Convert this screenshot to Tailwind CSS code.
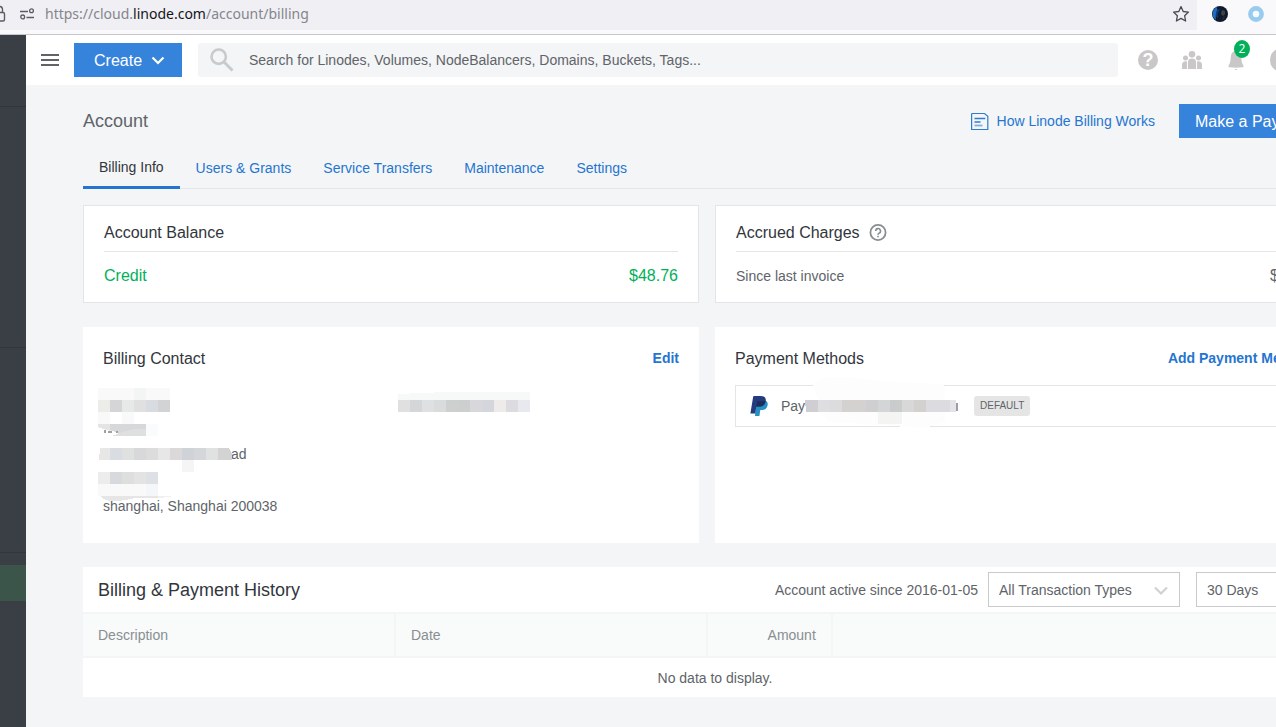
<!DOCTYPE html>
<html lang="en">
<head>
<meta charset="utf-8">
<meta name="viewport" content="width=device-width, initial-scale=1">
<title>Account | Billing</title>
<script src="https://cdn.jsdelivr.net/npm/@tailwindcss/browser@4"></script>
</head>
<body class="min-h-screen flex flex-col overflow-x-hidden bg-[#f4f5f6] font-['Liberation_Sans',Arial,sans-serif] text-sm leading-5 text-[#606469]">

<!-- Browser address bar -->
<div class="flex h-[35px] shrink-0 border-b border-[#c8c8cb] bg-[#f9f9fb]">
  <div class="flex h-[30px] flex-1 items-center bg-[#f0f0f4] pr-[7px] pb-[2px]">
    <svg class="h-[18px] w-[20px] shrink-0" viewBox="0 0 20 18" fill="none" stroke="#5b5b66" stroke-width="1.4"><rect x="-6" y="7.5" width="10.5" height="8.5" rx="1.5"/><path d="M-3.500 7.500V4.500a3 3 0 0 1 6 0v3"/></svg>
    <svg class="h-3 w-[15px] shrink-0" viewBox="0 0 15 12" fill="none" stroke="#5b5b66" stroke-width="1.3"><path d="M0 3.500h8M6.500 9.500H14"/><circle cx="11.500" cy="2.800" r="1.900"/><circle cx="2.700" cy="8.900" r="1.900"/></svg>
    <p class="ml-[10px] flex-1 font-['Noto_Sans','Open_Sans',sans-serif] text-sm leading-5 text-[#85858c]">https://cloud.<span class="text-[#15141a]">linode.com</span>/account/billing</p>
    <button type="button" aria-label="Bookmark this page"><svg class="block size-[18px]" viewBox="0 0 18 18" fill="none" stroke="#4a4a55" stroke-width="1.300" stroke-linejoin="round"><path d="M9 1.600l2.200 4.900 5.300.6-3.900 3.600 1 5.300L9 13.400 4.400 16l1-5.300L1.500 7.100l5.300-.6z"/></svg></button>
  </div>
  <div class="flex w-[79px] items-center gap-5 pb-[6px] pl-[15px]">
    <svg class="size-4" viewBox="0 0 16 16"><circle cx="8" cy="8" r="8" fill="#101a2c"/><path d="M5 1C1 3 0 7 1 11l3 3c0-3-1-5 1-7z" fill="#1d6ec4"/><path d="M6 3c-2 2-3 5-1 9l1-1c-1-3 0-5 2-7z" fill="#0b3d82"/><path d="M10 4l3 1v3l-2 2-2-2z" fill="#3d424b"/><path d="M11 11l2-1-1 3-2 1z" fill="#252b36"/></svg>
    <svg class="size-4" viewBox="0 0 16 16" fill="none"><circle cx="8" cy="8" r="5.600" fill="#f4faff" stroke="#99cbef" stroke-width="4.600"/></svg>
  </div>
</div>

<div class="flex flex-1">
  <!-- Collapsed navigation -->
  <nav class="flex w-[26px] shrink-0 flex-col bg-[#3a3f46]" aria-label="Main">
    <div class="h-[72px] border-b border-[#32363c]"></div>
    <div class="h-[241px] border-b border-[#32363c]"></div>
    <div class="h-[205px] border-b border-[#32363c]"></div>
    <a href="#" aria-label="Account" class="mt-3 h-9 bg-[#3b554b]"></a>
  </nav>

  <div class="-mr-[55px] min-w-0 flex-1">
    <header class="flex h-[50px] items-center bg-white pl-[15px]">
      <button type="button" aria-label="Open menu" class="flex w-[18px] flex-col gap-[3px]"><span class="h-[2px] w-full bg-[#606469]"></span><span class="h-[2px] w-full bg-[#606469]"></span><span class="h-[2px] w-full bg-[#606469]"></span></button>
      <button type="button" class="ml-[15px] flex h-[34px] w-[108px] items-center bg-[#3683dc] pt-[2px] pl-5 text-base text-white">Create
        <svg class="ml-[9px] h-3 w-[14px]" viewBox="0 0 14 12" fill="none" stroke="#fff" stroke-width="2.200"><path d="M1.500 2.500 7 8l5.500-5.500"/></svg>
      </button>
      <label class="ml-4 flex h-[34px] flex-1 items-center rounded-[3px] bg-[#f4f5f6] pl-3">
        <svg class="size-[24px] shrink-0" viewBox="0 0 24 24" fill="none" stroke="#c9cacb" stroke-width="2.600"><circle cx="8.700" cy="8.700" r="7.200"/><path d="M13.800 13.800 22.500 22.500" stroke-width="3"/></svg>
        <input type="text" aria-label="Search" placeholder="Search for Linodes, Volumes, NodeBalancers, Domains, Buckets, Tags..." class="ml-[15px] flex-1 bg-transparent text-sm outline-none placeholder:text-[#606469]">
      </label>
      <div class="flex w-[213px] items-center pl-5">
        <button type="button" aria-label="Help" class="size-5 rounded-full bg-[#c9c7c7] text-lg leading-5 font-bold text-white">?</button>
        <button type="button" aria-label="Community" class="ml-6"><svg class="block size-5" viewBox="0 0 20 20" fill="#c9c7c7"><circle cx="10" cy="4.300" r="3.300"/><circle cx="3.500" cy="8" r="2.500"/><circle cx="16.500" cy="8" r="2.500"/><path d="M5.900 19v-6.500a4.100 4.100 0 0 1 8.200 0V19zM0 19v-4.200a3.600 3.600 0 0 1 4.900-3.300V19zM20 19v-4.200a3.600 3.600 0 0 0-4.900-3.300V19z"/></svg></button>
        <button type="button" aria-label="Notifications, 2 new" class="relative ml-[26px]">
          <svg class="block h-[22px] w-4" viewBox="0 0 16 22" fill="#c9c7c7"><path d="M8 1.500c3.500.8 5 3.200 5.200 6.300.2 4.200.8 6.800 2.300 8.900.3.900-.200 1.500-1 1.600-4.300.6-8.700.6-13 0-.8-.1-1.300-.7-1-1.600C2 14.600 2.600 12 2.800 7.800 3 4.700 4.500 2.300 8 1.500zM6.500 20h3c-.5 1.300-2.500 1.300-3 0z"/></svg>
          <span class="absolute -top-[9px] left-[6px] h-[18px] w-4 rounded-[50%] bg-[#00b159] font-['Open_Sans','Noto_Sans',sans-serif] text-xs leading-[18px] text-white">2</span>
        </button>
        <button type="button" aria-label="Profile" class="ml-[26px] size-6 rounded-full bg-[#c9c7c7]"></button>
      </div>
    </header>

    <main class="pl-[57px]">
      <div class="flex h-[34px] items-center mt-[19px]">
        <h1 class="flex-1 text-lg leading-6">Account</h1>
        <a href="#" class="flex items-center gap-[7px] text-[#2575d0]">
          <svg class="size-5" viewBox="0 0 20 20" fill="none" stroke="#2f7bd3" stroke-width="1.200"><path d="M2.200 2.500h12.300l3.300 2.800v13.200H1.600V3z"/><path d="M4.500 7.500h10.800M4.500 11h6" stroke-width="1.500"/><path d="M4.500 14.500h8" stroke="#7faee3" stroke-width="1.800"/></svg>
          How Linode Billing Works</a>
        <button type="button" class="ml-6 h-[34px] w-[152px] bg-[#3683dc] pt-[2px] pl-4 text-left text-base text-white">Make a Payment</button>
      </div>

      <nav class="mt-[10px] flex h-[41px] border-b border-[#e3e5e8]" aria-label="Account sections">
        <a href="#" aria-current="page" class="h-[41px] border-b-[3px] border-[#2575d0] px-4 pt-[9px] text-[#32363c]">Billing Info</a>
        <a href="#" class="px-4 pt-[10px] text-[#2575d0]">Users &amp; Grants</a>
        <a href="#" class="px-4 pt-[10px] text-[#2575d0]">Service Transfers</a>
        <a href="#" class="px-4 pt-[10px] text-[#2575d0]">Maintenance</a>
        <a href="#" class="px-4 pt-[10px] text-[#2575d0]">Settings</a>
      </nav>

      <div class="mt-4 grid grid-cols-2 gap-x-4 gap-y-6">
        <section class="border border-[#e3e5e8] bg-white px-5 pt-[17px] pb-4">
          <h2 class="border-b border-[#e3e5e8] pb-2 text-base leading-5 text-[#32363c]">Account Balance</h2>
          <p class="mt-[14px] flex justify-between text-base leading-5 text-[#00b159]"><span>Credit</span><span>$48.76</span></p>
        </section>
        <section class="border border-[#e3e5e8] bg-white px-5 pt-[17px] pb-4">
          <h2 class="flex items-center gap-[9px] border-b border-[#e3e5e8] pb-2 text-base leading-5 text-[#32363c]">Accrued Charges
            <svg class="size-[18px]" viewBox="0 0 18 18" fill="none" stroke="#888f91" stroke-width="1.800"><circle cx="9" cy="8.500" r="7.600"/><path d="M6.700 7a2.400 2.400 0 1 1 3.500 2.100c-.8.500-1.200.8-1.200 1.600M9 11.700v1.600" stroke-width="1.600"/></svg>
          </h2>
          <p class="mt-[14px] flex justify-between leading-5"><span>Since last invoice</span><span class="text-base leading-5">$0.00</span></p>
        </section>

        <section class="h-[216px] bg-white px-5 pt-[22px]">
          <div class="flex justify-between"><h2 class="text-base leading-5 text-[#32363c]">Billing Contact</h2><a href="#" class="leading-[18px] font-bold text-[#2575d0]">Edit</a></div>
          <!-- Contact details, redacted apart from the city -->
          <div class="relative pt-[75px]">
            <svg class="absolute -left-[5px] top-[19px] h-[114px] w-[433px]" viewBox="0 0 433 114" shape-rendering="crispEdges" aria-hidden="true">
              <g fill="#f8f9f8"><path d="M0 0h72v12H0zM0 24h12v12H0zM24 24h12v12H24z"/></g>
              <path d="M36 0h12v12H36z" fill="#f3f5f4"/>
              <path d="M0 12h12v12H0z" fill="#ecece9"/><path d="M12 12h12v12H12z" fill="#d5d5d7"/><path d="M24 12h12v12H24z" fill="#e7e9e8"/><path d="M36 12h12v12H36z" fill="#dfe0df"/><path d="M48 12h12v12H48z" fill="#d8dce0"/><path d="M60 12h12v12H60z" fill="#d2d3d5"/>
              <path d="M0 36h20v8c-8-1-14-2-20-5z" fill="#e4e4e3"/><path d="M12 36h36v12H13l9-3-10-3z" fill="#d6d8d9"/><path d="M36 41h12v7H14l10-4z" fill="#dedfdf"/><path d="M48 36h12v12H48z" fill="#fafbfc"/><path d="M6 42h2v3H6zM10 43h4v2h-4zM18 43h2v2h-2z" fill="#a0a1a5"/>
              <path d="M2 60h10v12H1z" fill="#e7e7e5"/><path d="M12 60h12v12H12z" fill="#d9dde1"/><path d="M24 60h12v12H24z" fill="#dfe1e0"/><path d="M36 60h12v12H36z" fill="#d8d8da"/><path d="M48 60h12v12H48z" fill="#dcdcdd"/><path d="M60 60h12v12H60z" fill="#e7e7e8"/><path d="M72 60h12v12H72z" fill="#dad8d9"/><path d="M84 60h12v12H84z" fill="#cfd2d6"/><path d="M96 60h12v12H96z" fill="#d5d6da"/><path d="M108 60h12v12h-12z" fill="#e0e1e1"/><path d="M120 60h11l3 6v6h-14z" fill="#d3d3d3"/><path d="M84 72h12v12H84z" fill="#f5f5f6"/>
              <path d="M0 84h12v12H0z" fill="#ececeb"/><path d="M12 84h12v12H12z" fill="#d8d9dc"/><path d="M24 84h12v12H24z" fill="#dddfdd"/><path d="M36 84h12v12H36z" fill="#e3e3e4"/><path d="M48 84h12v12H48z" fill="#dde1e6"/><path d="M0 96h48v12H0z" fill="#faf9f9"/><path d="M48 96h12v12H48z" fill="#f4f6f9"/>
              <path d="M2 108h58v2H42c-12 0-16 4-30 3-5-1-8-3-10-5z" fill="#e6e6e6"/><path d="M60 108h15l-4 1-11 1z" fill="#f0f0f0"/>
              <path d="M300 6l48-2h84v8H300z" fill="#f7f8f8"/>
              <path d="M300 12h12v12h-12z" fill="#e0e0e1"/><path d="M312 12h12v12h-12z" fill="#d5d6d8"/><path d="M324 12h12v12h-12z" fill="#dfe0e2"/><path d="M336 12h12v12h-12z" fill="#dadbdd"/><path d="M348 12h12v12h-12z" fill="#cecfcf"/><path d="M360 12h12v12h-12z" fill="#cdcfce"/><path d="M372 12h12v12h-12z" fill="#d8d8dc"/><path d="M384 12h12v12h-12z" fill="#d4d6dc"/><path d="M396 12h12v12h-12z" fill="#eeebea"/><path d="M408 12h12v12h-12z" fill="#dcdce0"/><path d="M420 12h12v12h-12z" fill="#e8e9ee"/>
            </svg>
            <p class="pl-[128px]">ad</p>
            <p class="mt-8">shanghai, Shanghai 200038</p>
          </div>
        </section>
        <section class="bg-white px-5 pt-[22px]">
          <div class="flex justify-between"><h2 class="text-base leading-5 text-[#32363c]">Payment Methods</h2><a href="#" class="leading-[18px] font-bold text-[#2575d0]">Add Payment Method</a></div>
          <div class="relative mt-4 flex h-[42px] items-center border border-[#e3e5e8] pl-[14px]">
            <svg class="h-5 w-[18px]" viewBox="0 0 18 20" aria-label="PayPal"><path d="M6 6 15.500 4.500c2 1.200 2.600 3 2 5.200-.7 3-3 4.300-6 4.300h-1.200l-.9 6H5z" fill="#2790c3"/><path d="M3.200.5C3.300.2 3.600 0 4 0h6.800c3.500 0 5.500 1.800 4.900 5.100-.6 3.700-3 5.400-6.600 5.400H6.300L5.200 17.500H.4z" fill="#253b80"/><path d="M7.300 5.300 15.600 5c-.6 3.800-3 5.500-6.500 5.500H6.300z" fill="#1f2c5c"/></svg>
            <span class="ml-[13px] w-[193px]">Pay</span>
            <svg class="absolute left-[68px] -top-[10px] h-[56px] w-[155px]" viewBox="0 0 155 56" shape-rendering="crispEdges" aria-hidden="true"><path d="M8 8 24 1h22l30 4 62 3 3 2v36l-20 6-50-3-48-4z" fill="#fdfdfd"/><path d="M1 24h13v12H2z" fill="#cfced3"/><path d="M14 24h12v12H14z" fill="#dedee1"/><path d="M26 24h12v12H26z" fill="#dcdcde"/><path d="M38 24h24v12H38z" fill="#d3d2d1"/><path d="M62 24h12v12H62z" fill="#cfcfd2"/><path d="M74 24h12v12H74z" fill="#d4d5d7"/><path d="M86 24h12v12H86z" fill="#c9cbcd"/><path d="M98 24h12v12H98z" fill="#d8d8d8"/><path d="M110 24h12v12h-12z" fill="#d2d1cf"/><path d="M122 24h24v12h-24z" fill="#dcdce0"/><path d="M146 24h6v12h-6z" fill="#e4e4e8"/><path d="M152 27h2v8h-2z" fill="#9c9ea5"/><path d="M74 36h24v12H74z" fill="#f4f5f3"/></svg>
            <span class="h-5 rounded-[3px] bg-[#e5e5e5] px-[6px] text-[10px] leading-5">DEFAULT</span>
          </div>
        </section>
      </div>

      <section class="mt-6 bg-white">
        <div class="flex h-[45px] items-center">
          <h2 class="flex-1 pl-[15px] text-lg leading-6 text-[#32363c]">Billing &amp; Payment History</h2>
          <p>Account active since 2016-01-05</p>
          <div class="relative ml-[10px] w-[192px]">
            <select aria-label="Transaction types" class="block h-[35px] w-full appearance-none border border-[#c9cacb] bg-white pl-[10px] text-sm"><option>All Transaction Types</option></select>
            <svg class="pointer-events-none absolute right-3 top-3 h-3 w-[14px]" viewBox="0 0 14 12" fill="none" stroke="#d0d1d2" stroke-width="2.200"><path d="M1 3.500 7 9.500l6-6"/></svg>
          </div>
          <select aria-label="Period" class="ml-4 h-[35px] w-[135px] appearance-none border border-[#c9cacb] bg-white pl-[10px] text-sm"><option>30 Days</option></select>
        </div>
        <table class="w-full table-fixed border-collapse">
          <thead class="bg-[#f9fafa] text-[#888f91]">
            <tr class="h-11 border-y-2 border-[#f4f5f6]">
              <th scope="col" class="w-1/4 border-r-2 border-[#f4f5f6] px-[15px] text-left font-normal">Description</th>
              <th scope="col" class="w-1/4 border-r-2 border-[#f4f5f6] px-[15px] text-left font-normal">Date</th>
              <th scope="col" class="w-1/10 border-r-2 border-[#f4f5f6] px-[15px] text-right font-normal">Amount</th>
              <th scope="col" aria-label="Actions"></th>
            </tr>
          </thead>
          <tbody><tr class="h-10"><td colspan="4" class="pl-4 text-center">No data to display.</td></tr></tbody>
        </table>
      </section>
    </main>
  </div>
</div>
</body>
</html>
